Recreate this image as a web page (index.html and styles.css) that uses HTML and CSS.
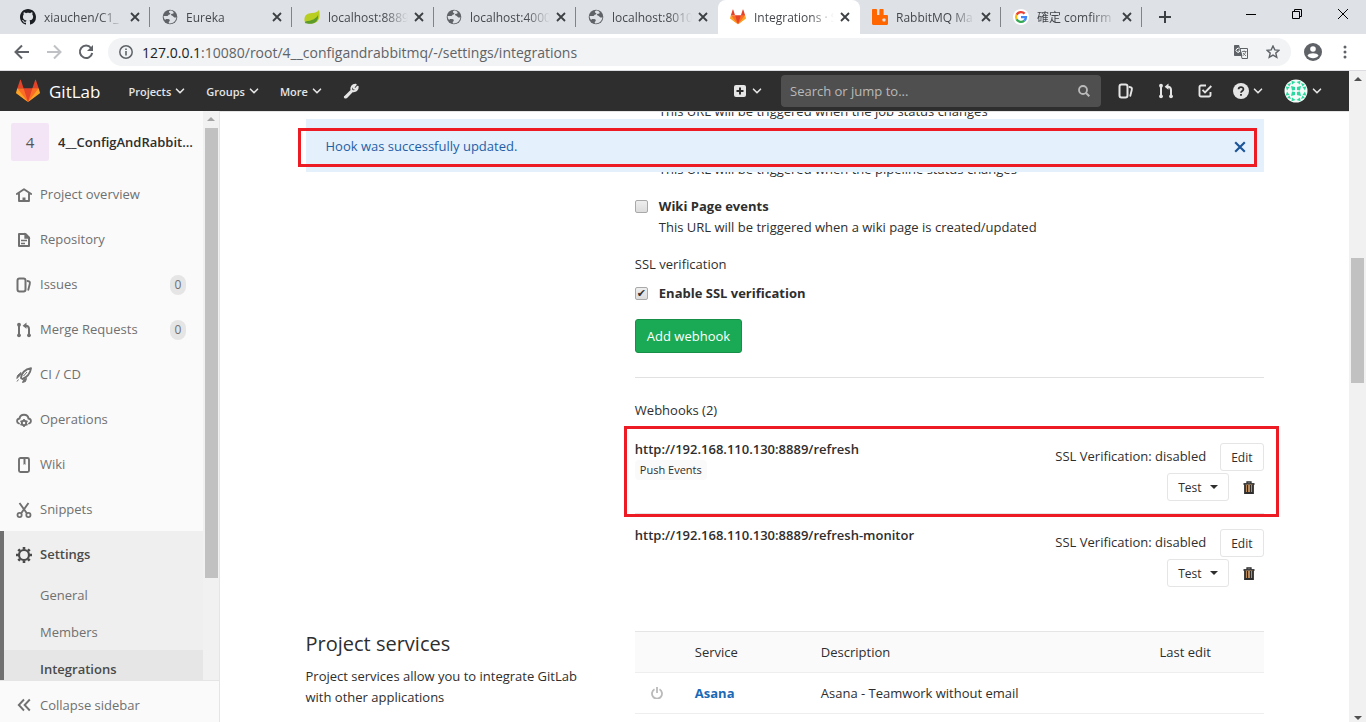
FILE: index.html
```html
<!DOCTYPE html>
<html lang="en">
<head>
<meta charset="utf-8">
<title>Integrations · Settings · GitLab</title>
<link rel="stylesheet" href="styles.css">
</head>
<body>
<svg class="defs" aria-hidden="true">
  <symbol id="x" viewBox="0 0 10 10"><path d="M1 1l8 8M9 1L1 9" fill="none" stroke="currentColor" stroke-width="1.8"/></symbol>
  <symbol id="chev" viewBox="0 0 10 10"><path d="M1.5 3.2L5 6.8l3.500-3.600" fill="none" stroke="currentColor" stroke-width="1.6" stroke-linecap="round" stroke-linejoin="round"/></symbol>
  <symbol id="globe" viewBox="0 0 16 16"><circle cx="8" cy="8" r="7.300" fill="#5f6368"/><path d="M8.400 1.600c-2 .6-1.800 2-.6 2.300 1 .3.600 1.500-.5 1.700-1.200.2-.8 1.500-2 1.500H1.600c0 1.500.5 2.900 1.500 4 .3-1 1.200-1.400 2.200-1.100 1.500.3 2.500.2 2.500 1.500 0 .9-1.200 1-1.100 2 0 .6.300.9.800 1 3.700.1 6.600-2.500 6.900-6.200-.6-.3-1 .5-1.800.3-1.400-.3-1.300-1.700-2.700-2-1-.2-1.300-1-.5-1.600.700-.5 1.900-.200 2.300-1.100.2-.6-.6-.8-.7-1.500C10.200 1.900 9.300 1.500 8.400 1.600z" fill="#dee1e6"/></symbol>
  <symbol id="tanuki" viewBox="0 0 36 36"><path fill="#e24329" d="M2 14l9.380 9v-9l-4-12.280c-.205-.632-1.176-.632-1.380 0zM34 14l-9.380 9v-9l4-12.280c.205-.632 1.176-.632 1.380 0zM18 34.380L3 14h30z"/><path fill="#fc6d26" d="M18 34.380L11.380 14H2l4 11zM18 34.380L24.620 14H34l-4 11z"/><path fill="#fca326" d="M2 14L.1 20.160c-.18.565 0 1.200.5 1.560l17.420 12.660zM34 14l1.900 6.160c.18.565 0 1.200-.5 1.560L18 34.380z"/></symbol>
  <symbol id="issues" viewBox="0 0 16 16"><rect x="1.500" y="1.500" width="8" height="13" rx="2" fill="none" stroke="currentColor" stroke-width="2"/><path d="M11.500 4c2.200.3 2.800 1 2.200 3.200l-1.400 5.600" fill="none" stroke="currentColor" stroke-width="1.900" stroke-linecap="round"/></symbol>
  <symbol id="merge" viewBox="0 0 16 16"><path d="M3 3v10M13 13V7c0-2-1-3.300-3.500-3.300" fill="none" stroke="currentColor" stroke-width="2"/><circle cx="3" cy="2.700" r="1.900" fill="currentColor"/><circle cx="3" cy="13.300" r="1.900" fill="currentColor"/><circle cx="13" cy="13.300" r="1.900" fill="currentColor"/><path d="M10.500.6v6.200L6.600 3.700z" fill="currentColor"/></symbol>
  <symbol id="trash" viewBox="0 0 12 13"><path d="M4 2.400V1h4v1.400" fill="none" stroke="currentColor" stroke-width="1.300"/><path d="M.5 3h11" stroke="currentColor" stroke-width="1.800"/><path d="M2 3.500v8.500h8V3.500" fill="#b98a5c" stroke="currentColor" stroke-width="1.800"/><path d="M4.500 4v7M7.500 4v7" stroke="currentColor" stroke-width="1"/></symbol>
</svg>

<header class="tabs">
  <div class="tab"><svg class="fav" viewBox="0 0 16 16"><path fill="#1b1f23" d="M8 0C3.580 0 0 3.580 0 8c0 3.540 2.290 6.530 5.470 7.590.4.070.55-.17.55-.38 0-.19-.01-.82-.01-1.490-2.010.37-2.530-.49-2.690-.94-.09-.23-.48-.94-.82-1.130-.28-.15-.68-.52-.01-.53.63-.01 1.080.58 1.230.82.72 1.210 1.870.87 2.330.66.070-.52.280-.87.510-1.070-1.780-.2-3.640-.89-3.640-3.950 0-.87.310-1.590.82-2.150-.08-.2-.36-1.020.080-2.120 0 0 .67-.21 2.200.82.640-.18 1.320-.27 2-.27s1.360.090 2 .27c1.530-1.040 2.200-.82 2.200-.82.440 1.100.160 1.920.080 2.120.510.560.82 1.270.82 2.150 0 3.070-1.870 3.750-3.650 3.950.290.250.540.730.540 1.480 0 1.070-.01 1.930-.01 2.200 0 .210.150.460.550.380A8.010 8.010 0 0 0 16 8c0-4.420-3.580-8-8-8z"/></svg><span class="title">xiauchen/C1_</span><button class="close" aria-label="Close tab"><svg><use href="#x"/></svg></button></div>
  <div class="tab"><svg class="fav"><use href="#globe"/></svg><span class="title">Eureka</span><button class="close" aria-label="Close tab"><svg><use href="#x"/></svg></button></div>
  <div class="tab"><svg class="fav" viewBox="0 0 16 16"><path fill="#b8ce21" d="M15 1c1.500 6 .8 13-7 13.500-3 .2-7-.5-7.500-2.500C0 6 3 4.500 8 4c3-.3 5.500-.8 7-3z"/><path fill="#5b9a2b" d="M14 6c-2 4-6 5.500-12.500 6.500L.8 14c3 1.200 9 1.500 11.500-1.500C14 10.500 14.300 8 14 6z"/></svg><span class="title">localhost:8889</span><button class="close" aria-label="Close tab"><svg><use href="#x"/></svg></button></div>
  <div class="tab"><svg class="fav"><use href="#globe"/></svg><span class="title">localhost:4000</span><button class="close" aria-label="Close tab"><svg><use href="#x"/></svg></button></div>
  <div class="tab before"><svg class="fav"><use href="#globe"/></svg><span class="title">localhost:8010</span><button class="close" aria-label="Close tab"><svg><use href="#x"/></svg></button></div>
  <div class="tab active"><svg class="fav"><use href="#tanuki"/></svg><span class="title">Integrations · S</span><button class="close" aria-label="Close tab"><svg><use href="#x"/></svg></button></div>
  <div class="tab"><svg class="fav" viewBox="0 0 16 16"><path fill="#f60" d="M1 0h3.200c.5 0 .8.300.8.8V6h2.400V.8c0-.5.300-.8.8-.8h2.600c.5 0 .8.300.8.800V6h3.200c.7 0 1.200.5 1.200 1.200v7.600c0 .7-.5 1.200-1.200 1.200H1.200C.5 16 0 15.500 0 14.800V1c0-.6.400-1 1-1z"/><rect x="10.500" y="9.500" width="3" height="3" rx=".7" fill="#dee1e6"/></svg><span class="title">RabbitMQ Ma</span><button class="close" aria-label="Close tab"><svg><use href="#x"/></svg></button></div>
  <div class="tab"><svg class="fav" viewBox="0 0 16 16"><circle cx="8" cy="8" r="8" fill="#fff"/><g fill="none" stroke-width="2.300"><path d="M11.600 4.600A5 5 0 0 0 3.600 5.700" stroke="#ea4335"/><path d="M3.600 5.700a5 5 0 0 0 0 4.600" stroke="#fbbc05"/><path d="M3.600 10.300a5 5 0 0 0 7.700 1.400" stroke="#34a853"/><path d="M11.300 11.700A5 5 0 0 0 13 8.100H8" stroke="#4285f4"/></g></svg><span class="title">確定 comfirm</span><button class="close" aria-label="Close tab"><svg><use href="#x"/></svg></button></div>
  <button class="newtab" aria-label="New tab"><svg viewBox="0 0 12 12"><path d="M6 0v12M0 6h12" stroke="currentColor" stroke-width="2"/></svg></button>
  <div class="window">
    <button aria-label="Minimize"><svg viewBox="0 0 10 10"><path d="M0 5.500h10" stroke="#000"/></svg></button>
    <button aria-label="Restore"><svg viewBox="0 0 10 10"><path d="M.5 2.500h7v7h-7zM2.500 2.500v-2h7v7h-2" fill="none" stroke="#000"/></svg></button>
    <button aria-label="Close"><svg viewBox="0 0 10 10"><path d="M0 0l10 10M10 0L0 10" stroke="#000"/></svg></button>
  </div>
</header>

<div class="toolbar">
  <button aria-label="Back"><svg viewBox="0 0 16 16"><path d="M15 8H2M8 1.500L1.500 8 8 14.500" fill="none" stroke="#5f6368" stroke-width="2"/></svg></button>
  <button aria-label="Forward"><svg viewBox="0 0 16 16"><path d="M1 8h13M8 1.500L14.500 8 8 14.500" fill="none" stroke="#bfc1c4" stroke-width="2"/></svg></button>
  <button aria-label="Reload"><svg viewBox="0 0 16 16"><path d="M13 4A6.200 6.200 0 1 0 14.200 9" fill="none" stroke="#5f6368" stroke-width="2"/><path d="M15 1v6H9z" fill="#5f6368"/></svg></button>
  <div class="omnibox">
    <svg class="i14" viewBox="0 0 14 14"><circle cx="7" cy="7" r="6.200" fill="none" stroke="#5f6368" stroke-width="1.500"/><path d="M7 6v4.500M7 3.400V5" stroke="#5f6368" stroke-width="1.600"/></svg>
    <span class="url"><b>127.0.0.1</b>:10080/root/4__configandrabbitmq/-/settings/integrations</span>
    <svg class="i14" viewBox="0 0 14 14"><path d="M6 3.500h7.500v10H8z" fill="#f1f3f4" stroke="#5f6368"/><path d="M0 1c0-.6.400-1 1-1h4l3.500 11H1c-.6 0-1-.4-1-1z" fill="#5f6368"/><path d="M5.800 4.200A2 2 0 1 0 6 6H4.300" fill="none" stroke="#fff"/><path d="M8 6.500h4.500M10.200 5.500v1M11.800 6.500c-.5 2-1.500 3-2.600 4M9 8l3 3" fill="none" stroke="#5f6368" stroke-width=".8"/></svg>
    <svg class="i14 star" viewBox="0 0 14 14"><path d="M7 1l1.800 3.900 4.200.4-3.200 2.800 1 4.200L7 10.100l-3.800 2.200 1-4.200L1 5.300l4.200-.4z" fill="none" stroke="#5f6368" stroke-width="1.400"/></svg>
  </div>
  <svg class="user" viewBox="0 0 18 18"><circle cx="9" cy="9" r="9" fill="#5f6368"/><circle cx="9" cy="6" r="2.800" fill="#fff"/><path d="M3.500 12.500c1.500-3 9.500-3 11 0-2.200 3.500-8.800 3.500-11 0z" fill="#fff"/></svg>
  <svg class="dots" viewBox="0 0 4 14"><g fill="#5f6368"><circle cx="2" cy="2" r="1.500"/><circle cx="2" cy="7" r="1.500"/><circle cx="2" cy="12" r="1.500"/></g></svg>
</div>

<div class="viewport">
  <div class="app">
    <nav class="navbar">
      <a class="brand" href="#"><svg><use href="#tanuki"/></svg>GitLab</a>
      <button class="menu">Projects<svg class="chev"><use href="#chev"/></svg></button>
      <button class="menu">Groups<svg class="chev"><use href="#chev"/></svg></button>
      <button class="menu">More<svg class="chev"><use href="#chev"/></svg></button>
      <a class="wrench" href="#" aria-label="Admin area"><svg class="i16" viewBox="0 0 16 16"><path d="M2.200 13.800l6.300-6.300C7.600 4.200 9.500 1.500 12.700 1.700L10.600 4l.5 1.600 1.500.4 2.100-2.200c.2 3-2 5-5.300 4.300l-6 6.100c-1.200.8-2.100-.2-1.200-.4z" fill="none" stroke="currentColor" stroke-width="2" stroke-linejoin="round"/></svg></a>
      <button class="menu plus" aria-label="New"><svg class="i12" viewBox="0 0 12 12"><rect width="12" height="12" rx="2" fill="currentColor"/><path d="M6 2.500v7M2.500 6h7" stroke="#2e2e2e" stroke-width="2"/></svg><svg class="chev"><use href="#chev"/></svg></button>
      <label class="search"><input type="text" placeholder="Search or jump to..." aria-label="Search or jump to"><svg class="i12" viewBox="0 0 12 12"><circle cx="5" cy="5" r="4" fill="none" stroke="currentColor" stroke-width="1.800"/><path d="M8 8l3.300 3.300" stroke="currentColor" stroke-width="2"/></svg></label>
      <div class="tools">
        <a href="#" aria-label="Issues"><svg class="i16"><use href="#issues"/></svg></a>
        <a href="#" aria-label="Merge requests"><svg class="i16"><use href="#merge"/></svg></a>
        <a href="#" aria-label="To-do list"><svg class="i14" viewBox="0 0 14 14"><path d="M8 1.500H3A1.500 1.500 0 0 0 1.500 3v8A1.500 1.500 0 0 0 3 12.500h8a1.500 1.500 0 0 0 1.500-1.500V8" fill="none" stroke="currentColor" stroke-width="1.900"/><path d="M4.500 5.800l2.500 2.500L13.300 2" fill="none" stroke="currentColor" stroke-width="1.900"/></svg></a>
      </div>
      <button class="menu help" aria-label="Help"><svg class="i16" viewBox="0 0 16 16"><circle cx="8" cy="8" r="8" fill="currentColor"/><path d="M5.600 6.300C5.600 3.300 10.500 3.400 10.400 6.200 10.400 8 8 7.900 8 9.800M8 10.900v1.800" fill="none" stroke="#2e2e2e" stroke-width="1.800"/></svg><svg class="chev"><use href="#chev"/></svg></button>
      <button class="menu me" aria-label="User menu"><svg class="avatar" viewBox="0 0 24 24"><circle cx="12" cy="12" r="11.500" fill="#f4fbf8"/><g fill="#2bd9a0"><path d="M7 7l4 1v3l-3 .5zM17 7l-4 1v3l3 .5zM7 17l4-1v-3l-3-.5zM17 17l-4-1v-3l3-.5z"/><path d="M7.500 1.800L11.500 3 8 5.500zM16.500 1.800L12.500 3 16 5.500zM7.500 22.200l4-1.200L8 18.500zM16.500 22.200l-4-1.200 3.500-2.500zM1.800 7.500L3 11.500 5.500 8zM1.800 16.500L3 12.500 5.500 16zM22.200 7.500L21 11.500 18.500 8zM22.200 16.500L21 12.500 18.500 16zM3.200 5.200L7 4 5.500 7.500zM20.800 5.200L17 4l1.500 3.500zM3.200 18.800L7 20l-1.500-3.500zM20.800 18.800L17 20l1.500-3.500z"/></g></svg><svg class="chev"><use href="#chev"/></svg></button>
    </nav>

    <div class="body">
      <aside class="sidebar">
        <div class="scroll">
          <div class="nav">
            <a class="project" href="#"><span class="tile">4</span><span class="name">4__ConfigAndRabbitmq</span></a>
            <a class="item" href="#"><svg class="i16" viewBox="0 0 16 16"><path d="M.8 7L8 2.300 15.200 7M3 6v8h10V6" fill="none" stroke="currentColor" stroke-width="1.900" stroke-linecap="round" stroke-linejoin="round"/><path d="M6.500 14v-3.500h3V14z" fill="currentColor"/></svg>Project overview</a>
            <a class="item" href="#"><svg class="i16" viewBox="0 0 16 16"><path d="M3 2h6.500L13 5.500V14H3z" fill="none" stroke="currentColor" stroke-width="2" stroke-linejoin="round"/><path d="M9 2v4h4zM5 8.500h6M5 11.500h4" fill="currentColor" stroke="currentColor" stroke-width="1.300"/></svg>Repository</a>
            <a class="item" href="#"><svg class="i16"><use href="#issues"/></svg>Issues<span class="count">0</span></a>
            <a class="item" href="#"><svg class="i16"><use href="#merge"/></svg>Merge Requests<span class="count">0</span></a>
            <a class="item" href="#"><svg class="i16" viewBox="0 0 16 16"><path d="M5 11C5 6.500 9 2 15 1.200 14.500 6.500 10.500 10.500 6.500 12z" fill="none" stroke="currentColor" stroke-width="1.900" stroke-linejoin="round"/><path d="M7.500 9L11 5M5 5.500L1.500 8.500.8 11.500 4.500 8zM10.500 11.500l-1 3-3 1 1.300-3zM2.500 12.500l-1.500 2" fill="currentColor" stroke="currentColor"/></svg>CI / CD</a>
            <a class="item" href="#"><svg class="i16" viewBox="0 0 16 16"><path d="M3 11.500C.2 10.500.5 6.800 3.600 6.500 4 1.500 12 1.500 12.400 6.500c3.100.3 3.400 4 .6 5" fill="none" stroke="currentColor" stroke-width="1.800" stroke-linecap="round"/><circle cx="8" cy="11" r="2.200" fill="none" stroke="currentColor" stroke-width="1.900"/><path d="M8 7v1.500M8 13.500V15M4.500 9l1.300.8M10.200 12.200l1.300.8M4.500 13l1.300-.8M10.200 9.800l1.300-.8" stroke="currentColor" stroke-width="1.600"/></svg>Operations</a>
            <a class="item" href="#"><svg class="i16" viewBox="0 0 16 16"><rect x="3" y="1" width="10" height="14" rx="1.500" fill="none" stroke="currentColor" stroke-width="1.900"/><path d="M7.500 1.500h2V8l-1-1-1 1z" fill="currentColor"/></svg>Wiki</a>
            <a class="item" href="#"><svg class="i16" viewBox="0 0 16 16"><path d="M3.500 1l7.500 10.500M12.500 1L5 11.500" stroke="currentColor" stroke-width="1.900"/><g fill="none" stroke="currentColor" stroke-width="1.800"><circle cx="3.600" cy="13" r="2.100"/><circle cx="12.400" cy="13" r="2.100"/></g></svg>Snippets</a>
            <div class="group">
              <a class="item current" href="#"><svg class="i16" viewBox="0 0 16 16"><circle cx="8" cy="8" r="5" fill="none" stroke="currentColor" stroke-width="2.200"/><path d="M8 0v2.500M8 13.500V16M0 8h2.500M13.500 8H16M2.300 2.300L4 4M12 12l1.700 1.700M13.700 2.300L12 4M4 12l-1.700 1.700" stroke="currentColor" stroke-width="2.600"/></svg>Settings</a>
              <a class="sub" href="#">General</a>
              <a class="sub" href="#">Members</a>
              <a class="sub on" href="#">Integrations</a>
            </div>
          </div>
          <div class="bar"><i class="up"></i><i class="thumb"></i></div>
        </div>
        <button class="collapse"><svg class="i16" viewBox="0 0 16 16"><path d="M8 2.500L2.800 8 8 13.500M13.800 2.500L8.600 8l5.200 5.500" fill="none" stroke="currentColor" stroke-width="1.900"/></svg>Collapse sidebar</button>
      </aside>

      <main class="main">
        <div class="content">
          <div class="flash" role="alert"><span>Hook was successfully updated.</span><button aria-label="Dismiss"><svg><use href="#x"/></svg></button><i class="mark"></i></div>

          <section class="split">
            <div></div>
            <div>
              <p class="hint">This URL will be triggered when the job status changes</p>
              <p class="hint pipeline">This URL will be triggered when the pipeline status changes</p>
              <div class="check"><input type="checkbox" id="wiki"><label for="wiki">Wiki Page events</label></div>
              <p class="hint">This URL will be triggered when a wiki page is created/updated</p>
              <h5 class="ssl">SSL verification</h5>
              <div class="check"><input type="checkbox" id="ssl" checked><label for="ssl">Enable SSL verification</label></div>
              <button class="add">Add webhook</button>
              <hr>
              <h5 class="hooks-title">Webhooks (2)</h5>
              <div class="hook marked">
                <div class="where"><strong>http://192.168.110.130:8889/refresh</strong><span class="badge">Push Events</span></div>
                <div class="actions"><span>SSL Verification: disabled</span><button class="btn">Edit</button><button class="btn">Test<i class="caret"></i></button><button class="bin" aria-label="Remove"><svg><use href="#trash"/></svg></button></div>
                <i class="mark"></i>
              </div>
              <div class="hook">
                <div class="where"><strong>http://192.168.110.130:8889/refresh-monitor</strong></div>
                <div class="actions"><span>SSL Verification: disabled</span><button class="btn">Edit</button><button class="btn">Test<i class="caret"></i></button><button class="bin" aria-label="Remove"><svg><use href="#trash"/></svg></button></div>
              </div>
            </div>
          </section>

          <section class="split services">
            <div class="about">
              <h4>Project services</h4>
              <p>Project services allow you to integrate GitLab with other applications</p>
            </div>
            <table>
              <colgroup><col class="c1"><col class="c2"><col><col class="c4"></colgroup>
              <thead><tr><th></th><th>Service</th><th>Description</th><th>Last edit</th></tr></thead>
              <tbody><tr><td><svg class="power" viewBox="0 0 12 12"><path d="M3.500 2.300a5 5 0 1 0 5 0M6 0v6" fill="none" stroke="#bababa" stroke-width="1.800"/></svg></td><td><a href="#">Asana</a></td><td>Asana - Teamwork without email</td><td></td></tr></tbody>
            </table>
          </section>
        </div>
      </main>
    </div>
  </div>
  <div class="pagebar"><i class="up"></i><i class="thumb"></i><i class="down"></i></div>
</div>
</body>
</html>
```

FILE: styles.css
```css
* { box-sizing: border-box; }
html, body { height: 100%; }
body {
  margin: 0;
  display: flex;
  flex-direction: column;
  overflow: hidden;
  background: #fff;
  color: #2e2e2e;
  font: 13px/21px "Open Sans", "Noto Sans", "Noto Sans CJK TC", sans-serif;
}
button { font: inherit; color: inherit; background: none; border: 0; padding: 0; }
a { color: inherit; text-decoration: none; }
p, h4, h5 { margin: 0; font-size: 13px; font-weight: 400; }
svg { display: block; flex: none; }
.defs { position: absolute; width: 0; height: 0; }
.i12 { width: 12px; height: 12px; }
.i14 { width: 14px; height: 14px; }
.i16 { width: 16px; height: 16px; }

/* Browser tab strip */
.tabs { display: flex; flex: none; height: 34px; padding-left: 8px; background: #dee1e6; }
.tab {
  display: flex;
  align-items: center;
  flex: 0 1 142px;
  min-width: 0;
  padding: 0 10px 0 12px;
  background: linear-gradient(#80848a, #80848a) right center / 1px 20px no-repeat;
}
.tab.before { background: none; }
.tab.active { background: #fff; border-radius: 8px 8px 0 0; }
.active ~ .tab { flex-basis: 141px; }
.fav { width: 16px; height: 16px; margin-right: 8px; }
.title {
  flex: 1;
  overflow: hidden;
  white-space: nowrap;
  font-size: 12px;
  color: #45494d;
  -webkit-mask-image: linear-gradient(90deg, #000 70%, transparent);
  mask-image: linear-gradient(90deg, #000 70%, transparent);
}
.close { margin-left: 6px; color: #3c4043; }
.close svg { width: 10px; height: 10px; }
.newtab { margin-left: 17px; color: #3c4043; }
.newtab svg { width: 12px; height: 12px; }
.window { display: flex; align-items: flex-start; gap: 36px; margin-left: auto; padding: 9px 18px 0 0; }
.window svg { width: 10px; height: 10px; }

/* Browser toolbar */
.toolbar {
  display: flex;
  align-items: center;
  flex: none;
  gap: 16px;
  height: 37px;
  padding: 0 19px 0 14px;
  border-bottom: 1px solid #dadce0;
}
.toolbar button svg { width: 16px; height: 16px; }
.omnibox {
  display: flex;
  align-items: center;
  flex: 1;
  height: 28px;
  min-width: 0;
  margin-left: -2px;
  padding: 0 11px;
  border-radius: 14px;
  background: #f1f3f4;
}
.url { flex: 1; overflow: hidden; margin-left: 9px; white-space: nowrap; font-size: 14px; color: #5f6368; }
.url b { font-weight: 400; color: #202124; }
.star { margin-left: 18px; }
.user { width: 18px; height: 18px; margin-left: -3px; }
.dots { width: 4px; height: 14px; margin-left: 5px; }

.viewport { display: flex; flex: 1; min-height: 0; }
.app { display: flex; flex-direction: column; flex: 1; min-width: 0; }

/* GitLab header */
.navbar {
  display: flex;
  align-items: center;
  flex: none;
  height: 40px;
  padding: 0 27px 0 16px;
  background: #2e2e2e;
  color: #e5e5e5;
}
.brand { display: flex; align-items: center; gap: 9px; margin-right: 28px; font-size: 17px; color: #fff; }
.brand svg { width: 24px; height: 24px; }
.menu { display: flex; align-items: center; gap: 4px; margin-right: 21px; font-size: 11px; font-weight: 600; }
.chev { width: 10px; height: 10px; }
.plus { gap: 6px; margin: 0 19px 0 auto; }
.search {
  display: flex;
  align-items: center;
  width: 320px;
  height: 32px;
  padding: 0 11px 0 9px;
  border-radius: 4px;
  background: #4f4f4f;
  color: #bababa;
}
.search input { flex: 1; min-width: 0; padding: 0; border: 0; outline: 0; background: none; font: inherit; color: inherit; }
.search input::placeholder { color: #bababa; opacity: 1; }
.tools { display: flex; align-items: center; gap: 24px; margin: 0 21px 0 17px; }
.help { gap: 4px; }
.me { gap: 4px; margin-right: 0; }
.avatar { width: 24px; height: 24px; }

.body { display: flex; flex: 1; min-height: 0; }

/* Project sidebar */
.sidebar {
  display: flex;
  flex-direction: column;
  flex: none;
  width: 220px;
  border-right: 1px solid #e5e5e5;
  background: #fafafa;
  color: #707070;
}
.scroll { display: flex; flex: 1; min-height: 0; }
.nav { flex: 1; min-width: 0; overflow: hidden; }
.project { display: flex; align-items: center; gap: 9px; height: 60px; padding: 2px 0 0 11px; color: #2e2e2e; font-weight: 600; }
.tile {
  flex: none;
  width: 38px;
  height: 38px;
  border-radius: 2px;
  background: #f3e5f5;
  color: #555;
  font-size: 15px;
  font-weight: 400;
  line-height: 38px;
  text-align: center;
}
.name { overflow: hidden; margin-right: 3px; white-space: nowrap; text-overflow: ellipsis; }
.item { display: flex; align-items: center; gap: 8px; height: 45px; padding: 2px 17px 0 16px; }
.count { margin-left: auto; width: 16px; border-radius: 10px; background: #e5e5e5; font-size: 12px; line-height: 20px; text-align: center; }
.group { border-left: 4px solid #707070; background: #efefef; }
.group .item { padding-left: 12px; }
.item.current, .sub.on { color: #4a4a4a; font-weight: 600; }
.sub { display: block; height: 37px; padding-left: 36px; line-height: 38px; }
.sub.on { background: #e6e6e6; }
.bar { width: 16px; background: #f1f1f1; }
.bar .thumb { display: block; height: 450px; margin: 0 1px 0 2px; background: #c1c1c1; }
.up, .down { display: block; border: 4px solid transparent; }
.up { height: 17px; width: 8px; margin: 0 auto; }
.up::before, .down::before { content: ""; display: block; width: 0; margin-left: -4px; border: 4px solid transparent; }
.up::before { margin-top: 2px; border-top: 0; border-bottom-color: #505050; }
.bar .up::before { border-bottom-color: #a3a3a3; }
.down::before { border-bottom: 0; border-top-color: #505050; }
.collapse { display: flex; align-items: center; flex: none; gap: 8px; height: 42px; padding: 7px 16px 0; border-top: 1px solid #e5e5e5; }

/* Page content */
.main { flex: 1; min-width: 0; overflow: hidden; border-top: 1px solid #e5e5e5; }
.content { position: relative; max-width: 990px; margin: 0 auto; padding: 0 16px; }
.flash {
  position: absolute;
  top: 7px;
  left: 16px;
  right: 16px;
  display: flex;
  align-items: center;
  justify-content: space-between;
  height: 53px;
  padding: 2px 18px 0 20px;
  background: #e4f0fc;
  color: #1f5fa6;
}
.flash svg { width: 12px; height: 12px; color: #1b5598; }
.mark { position: absolute; border: 3px solid #ed1c24; pointer-events: none; }
.flash .mark { inset: 9px 7px 5px -8px; }
.split { display: grid; grid-template-columns: 1fr 2fr; gap: 15px; }
.split > div:nth-child(2) { margin-top: -11px; }
.hint { margin-left: 24px; }
.pipeline { margin: 37px 0 16px 24px; }
.check { display: flex; align-items: center; gap: 11px; font-weight: 700; }
.check input {
  appearance: none;
  display: grid;
  place-items: center;
  width: 13px;
  height: 13px;
  margin: 0;
  border: 1px solid #a9a9a9;
  border-radius: 2px;
  background: linear-gradient(#eee, #dcdcdc);
}
.check input:checked::before { content: "✔"; color: #333; font: 11px/11px "DejaVu Sans", sans-serif; }
.ssl { margin: 16px 0 8px; }
.add {
  display: block;
  height: 34px;
  margin: 15px 0 24px;
  padding: 0 11px;
  border: 1px solid #168f48;
  border-radius: 3px;
  background: #1aaa55;
  color: #fff;
}
hr { height: 1px; margin: 0; border: 0; background: #e1e1e1; }
.hooks-title { margin: 22px 0 7px; }
.hook { position: relative; display: flex; justify-content: space-between; height: 86px; padding-top: 11px; }
.hook.marked { border-bottom: 1px solid #e5e5e5; }
.hook .mark { inset: -2px -15px -4px -11px; }
.where { display: flex; flex-direction: column; align-items: flex-start; }
.where strong { font-weight: 600; }
.badge { padding: 0 5px; border-radius: 4px; background: #fafafa; font-size: 11px; line-height: 20px; }
.actions {
  display: flex;
  flex-wrap: wrap;
  align-content: flex-start;
  justify-content: flex-end;
  width: 220px;
  gap: 2px 14px;
  padding-top: 4px;
}
.actions > span { line-height: 26px; }
.btn { height: 28px; padding: 0 10px; border: 1px solid #e5e5e5; border-radius: 3px; background: #fff; font-size: 12px; }
.caret { display: inline-block; margin: 0 0 3px 8px; border: 4px solid transparent; border-top-color: #2e2e2e; border-bottom: 0; }
.bin { padding: 0 9px 0 0; }
.bin svg { width: 12px; height: 13px; }

.services { margin-top: 31px; }
.about { padding-right: 16px; }
.services h4 { margin: 1px 0 10px; font-size: 20px; line-height: 24px; }
table { width: 100%; border-collapse: collapse; table-layout: fixed; align-self: start; }
.c1 { width: 44px; }
.c2 { width: 126px; }
.c4 { width: 120px; }
th, td { height: 41px; padding: 0 0 0 16px; border-bottom: 1px solid #eee; text-align: left; font-weight: 400; }
th { border-top: 1px solid #e5e5e5; background: #fafafa; }
td a { color: #1b69b6; font-weight: 700; }
.power { width: 12px; height: 12px; }

/* Page scrollbar */
.pagebar { display: flex; flex-direction: column; flex: none; width: 17px; background: #f1f1f1; }
.pagebar .thumb { height: 125px; margin: 170px 2px auto; background: #c1c1c1; }
.pagebar .down { width: 8px; height: 10px; margin: 0 auto; }
```
